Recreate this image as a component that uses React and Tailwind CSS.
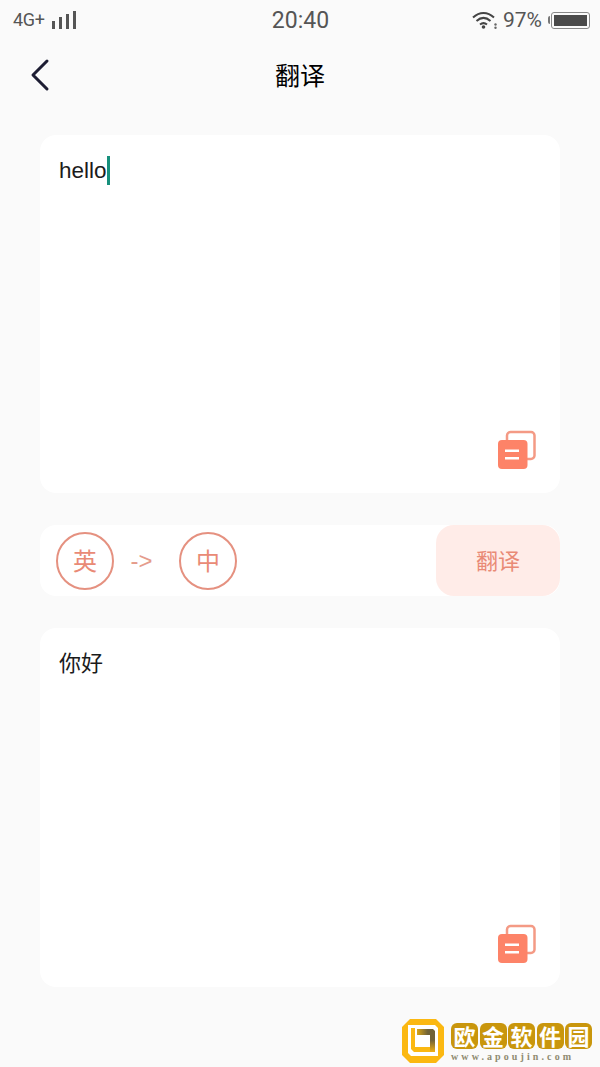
import React from "react";

const cjk = "font-['Noto_Sans_CJK_SC','Noto_Sans',sans-serif]";

function CopyIcon() {
  return (
    <svg width="40" height="40" viewBox="0 0 40 40" fill="none">
      <path d="M10 10V5.500A3.500 3.500 0 0 1 13.500 2h20.500A3.500 3.500 0 0 1 37.500 5.500v20a3.500 3.500 0 0 1-3.500 3.500H30" stroke="#f49a85" strokeWidth="2.500" />
      <rect x="1" y="10" width="29.500" height="29" rx="4" fill="#fd8368" />
      <rect x="8" y="19.500" width="14" height="2.500" fill="#fff" />
      <rect x="8" y="27" width="14" height="2.500" fill="#fff" />
    </svg>
  );
}

function Card({ tall, children }) {
  return (
    <div className={`${tall ? "h-[359px]" : "h-[358px]"} bg-white rounded-[16px] pl-[19px] pr-[23px] pt-[20px] pb-[23px] flex flex-col justify-between`}>
      <div className="text-[22px] leading-[32px] text-[#1b1b1b]">{children}</div>
      <div className="flex justify-end">
        <CopyIcon />
      </div>
    </div>
  );
}

function LangCircle({ label }) {
  return (
    <div className="w-[58px] h-[58px] rounded-full border-2 border-[#e59180] flex items-center justify-center text-[24px] text-[#e98a76] pb-[1px]">
      {label}
    </div>
  );
}

function Logo() {
  return (
    <div className="flex items-start gap-[7px]">
      <svg width="42" height="44" viewBox="0 0 42 44">
        <defs>
          <linearGradient id="bar" x1="0" y1="0" x2="1" y2="0">
            <stop offset="0" stopColor="#d9a516" />
            <stop offset="0.6" stopColor="#6f6238" />
            <stop offset="1" stopColor="#6f6238" />
          </linearGradient>
          <linearGradient id="side" x1="0" y1="1" x2="0" y2="0">
            <stop offset="0" stopColor="#f2b011" />
            <stop offset="0.7" stopColor="#6f6238" />
            <stop offset="1" stopColor="#6f6238" />
          </linearGradient>
        </defs>
        <path d="M8 0h26l8 8v28l-8 8H8l-8-8V8z" fill="#fbb811" />
        <path d="M6 6h27l3 3v28H9l-3-3z" fill="#fff" />
        <path d="M9 9h4v19h15v5H12l-3-3z" fill="#fbb811" />
        <path d="M15 10h16l2 2v4H15z" fill="url(#bar)" />
        <path d="M28 16h5v17h-5z" fill="url(#side)" />
      </svg>
      <div className="flex flex-col pt-[4px]">
        <div className="flex gap-[1.500px]">
          {["欧", "金", "软", "件", "园"].map((c) => (
            <span key={c} className="w-[27px] h-[26px] rounded-[6px] bg-[#c9960c] text-white text-[22px] leading-[25px] text-center font-bold">
              {c}
            </span>
          ))}
        </div>
        <div className="mt-[2px] text-[10px] leading-[11px] tracking-[3.100px] font-bold text-[#8f8a70] font-['Liberation_Serif',serif] whitespace-nowrap">
          www.apoujin.com
        </div>
      </div>
    </div>
  );
}

export default function App() {
  return (
    <div className={`w-[600px] h-[1067px] overflow-hidden bg-[#fafafa] flex flex-col ${cjk}`}>
      {/* status bar */}
      <div className="h-[40px] grid grid-cols-3 items-center pl-[13px] pr-[10px] text-[#555]">
        <div className="flex items-center gap-[7px]">
          <span className="text-[18px] leading-[20px] tracking-[-0.3px] font-['Roboto',sans-serif]">4G+</span>
          <div className="flex items-end gap-[4px] h-[18px]">
            <div className="w-[3px] h-[8px] bg-[#555]" />
            <div className="w-[3px] h-[12px] bg-[#555]" />
            <div className="w-[3px] h-[15px] bg-[#555]" />
            <div className="w-[3px] h-[18px] bg-[#555]" />
          </div>
        </div>
        <div className="text-center text-[23px] pt-[2px] pr-[2px] font-['Roboto',sans-serif]">20:40</div>
        <div className="flex items-center justify-end gap-[5px]">
          <svg className="mr-[1px]" width="25" height="18" viewBox="0 0 25 18" fill="none" stroke="#444" strokeWidth="2">
            <path d="M1 6.500c6.500-6 14.500-6 21 0" />
            <path d="M4.500 10c4.500-4 9.500-4 14 0" />
            <path d="M8 13.500c2.500-2 4.500-2 7 0" />
            <circle cx="11.500" cy="16" r="1.800" fill="#444" stroke="none" />
            <circle cx="23.500" cy="13.500" r="1.200" fill="#666" stroke="none" />
            <circle cx="23.500" cy="16.800" r="1.200" fill="#666" stroke="none" />
          </svg>
          <span className="text-[21px] leading-[24px] font-['Roboto',sans-serif]">97%</span>
          <div className="flex items-center gap-[1px] ml-[1px]">
            <div className="w-[2px] h-[8px] bg-[#777] rounded-l-[2px]" />
            <div className="w-[39px] h-[17px] border border-[#888] rounded-[3px] p-[2px]">
              <div className="w-full h-full bg-[#4a4a4a]" />
            </div>
          </div>
        </div>
      </div>

      {/* title bar */}
      <div className="h-[72px] flex items-center justify-center relative">
        <svg className="absolute left-[28px] top-[18px]" width="24" height="34" viewBox="0 0 24 34" fill="none">
          <path d="M19 3 5 17l14 14" stroke="#1d1d33" strokeWidth="3" strokeLinecap="round" strokeLinejoin="round" />
        </svg>
        <div className="text-[25px] text-black mb-[2px]">翻译</div>
      </div>

      <div className="px-10 pt-[23px] flex flex-col gap-[32px]">
        <Card>
          <div className="flex items-center font-['Liberation_Sans',sans-serif] text-[22.500px]">
            <span>hello</span>
            <div className="w-[3px] h-[29px] bg-[#17907c] -mt-[1px]" />
          </div>
        </Card>

        <div className="h-[71px] bg-white rounded-[16px] flex items-center justify-between pl-4">
          <div className="flex items-center">
            <LangCircle label="英" />
            <span className="w-[65px] pr-[10px] text-center text-[24px] text-[#e59c8c] font-['Liberation_Sans',sans-serif]">-&gt;</span>
            <LangCircle label="中" />
          </div>
          <div className="w-[124px] h-[71px] rounded-[18px] bg-[#ffece8] flex items-center justify-center text-[22px] text-[#e98a76] pb-[3px]">
            翻译
          </div>
        </div>

        <Card tall>
          <div className="-mt-[3px]">你好</div>
        </Card>
      </div>

      <div className="flex justify-end mt-[32px] pr-[8px]">
        <Logo />
      </div>
    </div>
  );
}
